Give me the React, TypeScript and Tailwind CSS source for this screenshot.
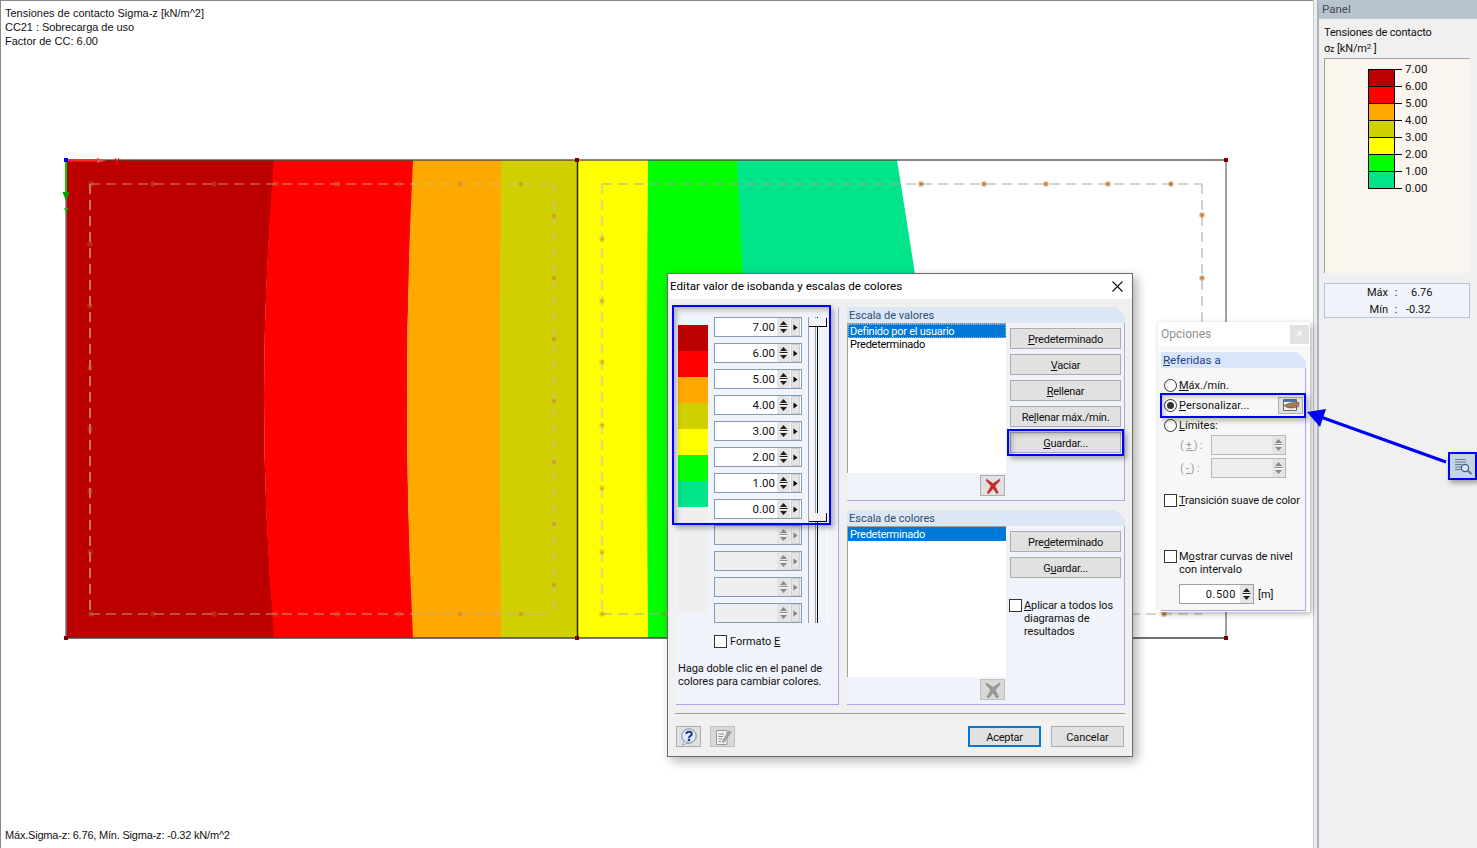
import type { ReactNode } from "react"

const swatches = ["bg-[#bc0000]", "bg-[#ff0000]", "bg-[#ffa800]", "bg-[#d0d000]", "bg-[#ffff00]", "bg-[#00ff00]", "bg-[#00e48a]"]
const values = ["7.00", "6.00", "5.00", "4.00", "3.00", "2.00", "1.00", "0.00"]

// finite element nodes along the dashed outlines
const nodes: [number, number][] = [
  ...[91, 153, 214, 276, 337, 399, 460, 521].flatMap((x) => [[x, 184], [x, 614]] as [number, number][]),
  ...[244, 306, 368, 429, 491, 552].map((y) => [90, y] as [number, number]),
  ...[216, 278, 339, 401, 462, 524, 585].map((y) => [554, y] as [number, number]),
  ...[239, 301, 362, 425, 488, 552].map((y) => [602, y] as [number, number]),
  ...[602, 664].map((x) => [x, 614] as [number, number]),
  ...[921, 984, 1046, 1108, 1171].map((x) => [x, 184] as [number, number]),
  [1164, 614],
  ...[215, 278, 340].map((y) => [1202, y] as [number, number]),
]

function Model() {
  return (
    <svg className="absolute inset-0" width="1313" height="848" viewBox="0 0 1313 848">
      <rect x="66" y="160" width="1160" height="478" fill="#ffffff" />
      <path d="M66 160H275Q253 400 275 638H66Z" fill="#bc0000" />
      <path d="M274 160H414Q400 400 414 638H274Q254 400 274 160Z" fill="#ff0000" />
      <path d="M413 160H502Q499 400 502 638H413Q401 400 413 160Z" fill="#ffa800" />
      <path d="M501 160H577V638H501Q499 400 501 160Z" fill="#d0d000" />
      <path d="M577 160H649Q646 400 649 638H577Z" fill="#ffff00" />
      <path d="M648 160H738L760 638H648Q646 400 648 160Z" fill="#00ff00" />
      <path d="M737 160H897L916 280L930 638H760Z" fill="#00e48a" />
      <path d="M90 184H554" fill="none" stroke="#d0c8c0" strokeWidth="1" strokeDasharray="10 6" opacity="0.7" />
      <path d="M90 614H554" fill="none" stroke="#b8b0a8" strokeWidth="1" strokeDasharray="10 6" opacity="0.9" />
      <path d="M90 184V614M554 184V614" fill="none" stroke="#c8c0b0" strokeWidth="2" strokeDasharray="10 6" opacity="0.6" />
      <path d="M602 184H1202M602 614H1202" fill="none" stroke="#a8a8a8" strokeWidth="1" strokeDasharray="10 6" />
      <path d="M602 184V614" fill="none" stroke="#c8c8b0" strokeWidth="2" strokeDasharray="10 6" opacity="0.7" />
      <path d="M1202 184V614" fill="none" stroke="#cfcfcf" strokeWidth="2" strokeDasharray="10 6" />
      {nodes.map(([x, y]) => (
        <g key={`${x}-${y}`} opacity={x > 900 ? 1 : 0.5}>
          <circle cx={x} cy={y} r="3" fill="#d08840" opacity="0.45" />
          <rect x={x - 1.5} y={y - 1.5} width="3" height="3" fill="#b8651a" opacity="0.8" />
        </g>
      ))}
      <path d="M66 160H1226" stroke="#444444" strokeWidth="1.5" opacity="0.85" />
      <path d="M66 638H1226" stroke="#444444" strokeWidth="1.5" />
      <path d="M66 160V638" stroke="#777777" strokeWidth="1.5" />
      <path d="M1226 160V638" stroke="#808080" strokeWidth="1.5" />
      <path d="M577.5 160V638" stroke="#222222" strokeWidth="1.5" />
      {[[577, 160], [1226, 160], [66, 638], [577, 638], [1226, 638]].map(([x, y]) => (
        <rect key={`${x}${y}`} x={x - 2} y={y - 2} width="4" height="4" fill="#800000" />
      ))}
      <path d="M66 160.5H98" stroke="#ff2020" strokeWidth="2.5" />
      <path d="M97 158L106 160.5L97 163Z" fill="#d85050" />
      <path d="M115 158L119 165M119 158L115 165" stroke="#ff0000" />
      <path d="M66 160V194" stroke="#00d000" strokeWidth="2" />
      <path d="M62.5 192H69.5L66 201Z" fill="#00a000" />
      <path d="M64 208L66 211L68 208M66 211V215" stroke="#00d000" fill="none" />
      <rect x="64" y="158" width="4" height="4" fill="#0000ff" />
    </svg>
  )
}

function Arrows({ disabled }: { disabled?: boolean }) {
  const c = disabled ? "#8a8a8a" : "#202020"
  return (
    <svg width="13" height="18" viewBox="0 0 13 18" className="shrink-0">
      <rect width="13" height="18" fill="#e4e4e4" />
      <path d="M6.5 3L10 7H3Z" fill={c} />
      <path d="M2.5 8.5H10.5" stroke={c} />
      <path d="M6.5 15L10 11H3Z" fill={c} />
      <path d="M2.5 9.5H10.5" stroke="#ffffff" />
    </svg>
  )
}

function ValueRow({ value }: { value?: string }) {
  return (
    <div className={`flex h-[20px] w-[88px] items-center border border-[#7f9db9] ${value ? "bg-white" : "bg-[#efefef]"}`}>
      <span className="flex-1 pr-[2px] pt-[1px] text-right text-[11.5px] leading-none text-[#111]">{value}</span>
      <Arrows disabled={!value} />
      <span className="ml-[1px] mr-[1px] flex h-[18px] w-[9px] items-center justify-center border border-[#cfcfcf] bg-[#e4e4e4]">
        <svg width="5" height="7" viewBox="0 0 5 7">
          <path d="M0.5 0.5L4.5 3.5L0.5 6.5Z" fill={value ? "#000" : "#808080"} />
        </svg>
      </span>
    </div>
  )
}

function Btn({ children, primary }: { children: ReactNode; primary?: boolean }) {
  return (
    <div
      className={`flex h-[21px] items-center justify-center bg-[#e1e1e1] pt-[1px] text-[11px] leading-none tracking-[-0.25px] text-[#111] ${
        primary ? "w-[73px] border-2 border-[#0078d7]" : "w-[111px] border border-[#adadad]"
      }`}
    >
      <span>{children}</span>
    </div>
  )
}

function Check({ className = "" }: { className?: string }) {
  return <span className={`block h-[13px] w-[13px] shrink-0 border border-[#333] bg-white ${className}`} />
}

function Radio({ on }: { on?: boolean }) {
  return (
    <span className="flex h-[13px] w-[13px] shrink-0 items-center justify-center rounded-full border border-[#333] bg-white">
      {on && <span className="h-[7px] w-[7px] rounded-full bg-[#333]" />}
    </span>
  )
}

function CrossIcon({ disabled }: { disabled?: boolean }) {
  return (
    <svg width="16" height="16" viewBox="0 0 16 16">
      <path d="M1.5 1L8 5.5L14.5 1L15 2.5L10 8L13.5 15L11.5 15.5L8 10.5L4 15.5L2 15L6 8L1 2.5Z" fill={disabled ? "#9a9a9a" : "#d92020"} stroke={disabled ? "#7f7f7f" : "#8a6a6a"} strokeWidth="0.6" />
    </svg>
  )
}

function GroupHead({ children, tone = "bg-[#dde6f4]" }: { children: ReactNode; tone?: string }) {
  return (
    <div className={`h-[16px] pl-[2px] text-[11px] leading-[17px] text-[#2c5070] [clip-path:polygon(0_0,calc(100%-9px)_0,100%_9px,100%_100%,0_100%)] ${tone}`}>
      {children}
    </div>
  )
}

function ListRow({ children, selected, focus }: { children: ReactNode; selected?: boolean; focus?: boolean }) {
  return (
    <div
      className={`pl-[2px] text-[11px] tracking-[-0.25px] ${selected ? "h-[14px] bg-[#0078d7] leading-[15px] text-white" : "h-[13px] leading-[13px] text-black"} ${
        focus ? "outline-1 -outline-offset-1 outline-dotted outline-[#8ab8e0]" : ""
      }`}
    >
      {children}
    </div>
  )
}

function IconBtn({ children, disabled, className = "" }: { children: ReactNode; disabled?: boolean; className?: string }) {
  return (
    <div className={`flex h-[21px] w-[25px] items-center justify-center border ${disabled ? "border-[#c0c0c0] bg-[#d8d8d8]" : "border-[#adadad] bg-[#e1e1e1]"} ${className}`}>
      {children}
    </div>
  )
}

function Dialog() {
  return (
    <div className="absolute left-[667px] top-[273px] h-[484px] w-[466px] border border-[#6a6a6a] bg-[#f0f0f0] shadow-[4px_4px_10px_rgba(0,0,0,0.3)]">
      <div className="flex h-[25px] items-center justify-between bg-white pl-[2px] pr-[9px] text-[11.65px] text-black">
        <span>Editar valor de isobanda y escalas de colores</span>
        <svg width="11" height="11" viewBox="0 0 11 11">
          <path d="M0.5 0.5L10.5 10.5M10.5 0.5L0.5 10.5" stroke="#111" strokeWidth="1.1" />
        </svg>
      </div>

      <div className="flex gap-[8px] pl-[8px] pt-[8px]">
        {/* isobands */}
        <div className="flex h-[398px] w-[163px] flex-col border-b border-r border-[#a8a8e8] bg-[#f0f3f9] pl-[2px] pt-[10px]">
          <div className="flex gap-[6px]">
            <div className="mt-[8px] flex h-[288px] w-[30px] flex-col">
              {swatches.map((s) => (
                <div key={s} className={`h-[26px] ${s}`} />
              ))}
              <div className="flex-1 bg-[#efefef]" />
            </div>
            <div className="flex flex-col gap-[6px]">
              {values.map((v) => (
                <ValueRow key={v} value={v} />
              ))}
              {[0, 1, 2, 3].map((i) => (
                <ValueRow key={i} />
              ))}
            </div>
            <div className="relative h-[306px] w-[20px] border-l border-r border-l-[#a0a0a0] border-r-white">
              <div className="absolute bottom-0 left-[6px] top-0 w-[3px] border-l border-r border-l-[#999] border-r-black" />
              <div className="absolute left-0 right-0 top-[1px] h-[9px] border-b border-r border-black bg-[#f2f2f2]" />
              <div className="absolute left-0 right-0 top-[196px] h-[9px] border-b border-r border-black bg-[#f2f2f2]" />
            </div>
          </div>
          <div className="ml-[36px] mt-[12px] flex items-center gap-[3px] text-[11px] leading-[13px] text-[#111]">
            <Check />
            <span>
              Formato <u>E</u>
            </span>
          </div>
          <p className="mt-[14px] text-[11px] leading-[13px] tracking-[-0.05px] text-[#111]">
            Haga doble clic en el panel de
            <br />
            colores para cambiar colores.
          </p>
        </div>

        <div className="flex w-[278px] flex-col gap-[9px]">
          {/* value scale */}
          <div className="flex h-[194px] flex-col">
            <GroupHead>Escala de valores</GroupHead>
            <div className="flex flex-1 border-b border-r border-[#a8a8e8] bg-[#f0f3f9]">
              <div className="w-[159px]">
                <div className="h-[150px] border-l border-t border-[#a0a0a0] bg-white">
                  <ListRow selected focus>Definido por el usuario</ListRow>
                  <ListRow>Predeterminado</ListRow>
                </div>
                <div className="flex justify-end pr-[1px] pt-[2px]">
                  <IconBtn><CrossIcon /></IconBtn>
                </div>
              </div>
              <div className="flex flex-col gap-[5px] pl-[4px] pt-[5px]">
                <Btn><u>P</u>redeterminado</Btn>
                <Btn><u>V</u>aciar</Btn>
                <Btn><u>R</u>ellenar</Btn>
                <Btn>Re<u>l</u>lenar máx./mín.</Btn>
                <Btn><u>G</u>uardar...</Btn>
              </div>
            </div>
          </div>

          {/* colour scale */}
          <div className="flex h-[195px] flex-col">
            <GroupHead>Escala de colores</GroupHead>
            <div className="flex flex-1 border-b border-r border-[#a8a8e8] bg-[#f0f3f9]">
              <div className="w-[159px]">
                <div className="h-[151px] border-l border-t border-[#a0a0a0] bg-white">
                  <ListRow selected>Predeterminado</ListRow>
                </div>
                <div className="flex justify-end pr-[1px] pt-[2px]">
                  <IconBtn disabled><CrossIcon disabled /></IconBtn>
                </div>
              </div>
              <div className="flex flex-col pl-[4px] pt-[5px]">
                <div className="flex flex-col gap-[5px]">
                  <Btn>Pre<u>d</u>eterminado</Btn>
                  <Btn>G<u>u</u>ardar...</Btn>
                </div>
                <div className="ml-[-1px] mt-[21px] flex gap-[2px] text-[11px] leading-[13px] tracking-[-0.1px] text-[#111]">
                  <Check />
                  <span className="whitespace-nowrap">
                    <u>A</u>plicar a todos los
                    <br />
                    diagramas de
                    <br />
                    resultados
                  </span>
                </div>
              </div>
            </div>
          </div>
        </div>
      </div>

      <div className="mx-[7px] mt-[8px] border-t border-[#a0a0a0]" />

      <div className="flex items-start pl-[8px] pr-[8px] pt-[12px]">
        <IconBtn className="border-[#a8a8a8]">
          <svg width="18" height="18" viewBox="0 0 18 18">
            <circle cx="9" cy="8" r="7.2" fill="#dfe9f8" stroke="#7a8ea8" />
            <path d="M4 13.5L2.5 17L8.5 14.5Z" fill="#f4f7fb" stroke="#7a8ea8" strokeWidth="0.7" />
            <path d="M6.3 6C6.6 3 11.8 3 11.8 6C11.8 8 9 7.6 9 10.2" fill="none" stroke="#1e3a78" strokeWidth="2" />
            <rect x="7.8" y="11" width="2.4" height="2.2" fill="#1e3a78" />
          </svg>
        </IconBtn>
        <IconBtn disabled className="ml-[9px]">
          <svg width="18" height="18" viewBox="0 0 18 18">
            <path d="M2.5 2.5H13V16.5H2.5Z" fill="#f0f0f0" stroke="#9a9a9a" />
            <path d="M4.5 6H10M4.5 8.5H9M4.5 11H8M4.5 13.5H7" stroke="#8a8a8a" />
            <path d="M9 12L15 3L17 4.5L10.5 13.5L8.5 14.5Z" fill="#a8a8a8" stroke="#7a7a7a" strokeWidth="0.6" />
          </svg>
        </IconBtn>
        <div className="ml-auto flex gap-[10px]">
          <Btn primary>Aceptar</Btn>
          <div className="flex h-[21px] w-[73px] items-center justify-center border border-[#adadad] bg-[#e1e1e1] pt-[1px] text-[11px] leading-none tracking-[-0.1px] text-[#111]">Cancelar</div>
        </div>
      </div>

      {/* callouts */}
      <div className="absolute left-[4px] top-[31px] h-[220px] w-[159px] border-2 border-[#0000ff] shadow-[3px_3px_5px_rgba(0,0,0,0.3),inset_3px_3px_5px_rgba(0,0,0,0.25)]" />
      <div className="absolute left-[339px] top-[155px] h-[27px] w-[117px] border-2 border-[#0000ff] shadow-[3px_3px_5px_rgba(0,0,0,0.3),inset_3px_3px_5px_rgba(0,0,0,0.25)]" />
    </div>
  )
}

function SmallField({ label }: { label: ReactNode }) {
  return (
    <div className="flex h-[20px] items-center pl-[19px] text-[11px] text-[#9a9a9a]">
      <span className="w-[31px] tracking-[2px]">{label}</span>
      <div className="flex h-[20px] w-[75px] items-center justify-end border border-[#b8b8b8] bg-[#eeeeee]">
        <Arrows disabled />
      </div>
    </div>
  )
}

function Options() {
  return (
    <div className="absolute left-[1158px] top-[322px] h-[290px] w-[152px] bg-[#f7f7f7] shadow-[2px_2px_6px_rgba(0,0,0,0.3)]">
      <div className="flex h-[24px] items-center justify-between bg-white pl-[3px] pr-[1px] text-[12px] text-[#8f8f8f]">
        <span>Opciones</span>
        <span className="flex h-[19px] w-[19px] items-center justify-center bg-[#e2e2e2] text-[10px] leading-none text-white">×</span>
      </div>
      <div className="ml-[3px] mt-[6px] w-[145px]">
        <GroupHead tone="bg-[#d8e5fb]"><span className="text-[11.5px] text-[#1f3f88]"><u>R</u>eferidas a</span></GroupHead>
        <div className="h-[243px] border-b border-r border-[#a8a8e8] pt-[7px] text-[11px] leading-[13px] text-[#111]">
          <div className="flex h-[20px] items-center gap-[2px] pl-[3px]">
            <Radio />
            <span><u>M</u>áx./mín.</span>
          </div>
          <div className="flex h-[20px] items-center gap-[2px] pl-[3px]">
            <Radio on />
            <span className="tracking-[0.1px]"><u>P</u>ersonalizar...</span>
            <div className="ml-auto mr-[2px] flex h-[17px] w-[25px] items-center justify-center border border-[#adadad] bg-[#e1e1e1]">
              <svg width="18" height="14" viewBox="0 0 18 14">
                <path d="M1.5 1.5H14.5V12.5H1.5Z" fill="#f4f4f4" stroke="#666" />
                <path d="M1.5 1.5H14.5V4H1.5Z" fill="#4a78a8" />
                <path d="M2 7.5C6 5 11 4 17 4.5L16.5 8.5C13 10 9 10.5 5 9.5Z" fill="#a87a58" stroke="#5a3a20" strokeWidth="0.5" />
              </svg>
            </div>
          </div>
          <div className="flex h-[20px] items-center gap-[2px] pl-[3px]">
            <Radio />
            <span><u>L</u>ímites:</span>
          </div>
          <div className="flex flex-col gap-[3px]">
            <SmallField label={<>(<u>±</u>):</>} />
            <SmallField label={<>(<u>-</u>):</>} />
          </div>
          <div className="ml-[3px] mt-[16px] flex items-start gap-[2px]">
            <Check />
            <span className="whitespace-nowrap tracking-[-0.15px]"><u>T</u>ransición suave de color</span>
          </div>
          <div className="ml-[3px] mt-[43px] flex items-start gap-[2px]">
            <Check />
            <span>
              M<u>o</u>strar curvas de nivel
              <br />
              con intervalo
            </span>
          </div>
          <div className="ml-[18px] mt-[8px] flex items-center">
            <div className="flex h-[20px] w-[75px] items-center border border-[#a0a0a0] bg-white">
              <span className="flex-1 pr-[4px] text-right tracking-[0.5px]">0.500</span>
              <Arrows />
            </div>
            <span className="ml-[4px]">[m]</span>
          </div>
        </div>
      </div>
      <div className="absolute left-[2px] top-[71px] h-[25px] w-[146px] border-2 border-[#0000ff] shadow-[3px_3px_5px_rgba(0,0,0,0.25),inset_2px_2px_4px_rgba(0,0,0,0.2)]" />
    </div>
  )
}

function Pointer() {
  return (
    <>
      <svg className="absolute left-[1300px] top-[400px]" width="160" height="75" viewBox="0 0 160 75">
        <path d="M146 62L18 16" stroke="#0000ff" strokeWidth="3" />
        <path d="M7 12L26 9L20 27Z" fill="#0000ff" />
      </svg>
      <div className="absolute left-[1448px] top-[452px] flex h-[28px] w-[29px] items-center justify-center border-2 border-[#0000ff] bg-[#c4d6e6] shadow-[2px_3px_5px_rgba(0,0,0,0.35)]">
        <svg width="20" height="18" viewBox="0 0 20 18">
          <path d="M2 2.5H13M2 5H13M2 7.5H9M2 10H8M2 12.5H8" stroke="#6a7a88" />
          <circle cx="12" cy="11" r="3.6" fill="#d8e8f8" stroke="#3a5a88" strokeWidth="1.2" />
          <path d="M14.8 13.8L18.5 17" stroke="#5a6a88" strokeWidth="2" />
        </svg>
      </div>
    </>
  )
}

function Panel() {
  return (
    <div className="flex w-[158px] flex-col bg-[#f0f0f0]">
      <div className="flex h-[19px] shrink-0 items-center bg-[#b9c3cc] pl-[3px] text-[11.5px] text-[#404a54]">Panel</div>
      <div className="flex flex-1 flex-col pl-[5px] pr-[7px]">
        <div className="pt-[6px] text-[11px] leading-[16px] tracking-[-0.15px] text-[#111]">
          <div>Tensiones de contacto</div>
          <div className="h-[16px]">
            σ<span className="text-[9px]">z</span> [kN/m<span className="align-top text-[8px] leading-[12px]">2</span> ]
          </div>
        </div>
        <div className="mt-[1px] flex h-[215px] border-l border-t border-[#a0a0a0] bg-[#faf6ef] pl-[43px] pt-[10px]">
          <div className="flex h-[120px] w-[27px] flex-col border-b border-l border-r border-black">
            {swatches.map((s) => (
              <div key={s} className={`h-[17px] border-t border-black ${s}`} />
            ))}
          </div>
          <div className="-mt-[8px] flex flex-col">
            {values.map((v) => (
              <div key={v} className="flex h-[17px] items-center text-[11.5px] text-[#111]">
                <span className="mr-[3px] h-px w-[7px] bg-black" />
                {v}
              </div>
            ))}
          </div>
        </div>
        <div className="mt-[10px] grid h-[35px] grid-cols-[63px_16px_1fr] content-center border border-[#b8c0e8] bg-[#f0f3f9] text-[11px] leading-[17px] text-[#111]">
          <span className="text-right">Máx</span>
          <span className="text-center">:</span>
          <span className="pl-[7px]">6.76</span>
          <span className="text-right">Mín</span>
          <span className="text-center">:</span>
          <span className="pl-[2px]">-0.32</span>
        </div>
      </div>
    </div>
  )
}

export default function App() {
  return (
    <div className="relative flex h-[848px] w-[1477px] overflow-hidden bg-white [font-family:Roboto,sans-serif]">
      <div className="relative h-full w-[1313px] border-l border-t border-[#8a8a8a]">
        <div className="absolute -left-px -top-px">
          <Model />
        </div>
        <div className="relative flex h-full flex-col justify-between pb-[6px] pl-[4px] pt-[5px] text-[11px] leading-[14px] text-[#111] [font-family:'Liberation_Sans',sans-serif]">
          <div>
            <div>Tensiones de contacto Sigma-z [kN/m^2]</div>
            <div className="tracking-[-0.05px]">CC21 : Sobrecarga de uso</div>
            <div>Factor de CC: 6.00</div>
          </div>
          <div className="tracking-[-0.2px]">Máx.Sigma-z: 6.76, Mín. Sigma-z: -0.32 kN/m^2</div>
        </div>
      </div>
      <div className="flex w-[6px] border-l border-r-2 border-l-[#c8c8c8] border-r-[#aab4c6] bg-[#ececec]" />
      <Panel />
      <Dialog />
      <Options />
      <Pointer />
    </div>
  )
}
